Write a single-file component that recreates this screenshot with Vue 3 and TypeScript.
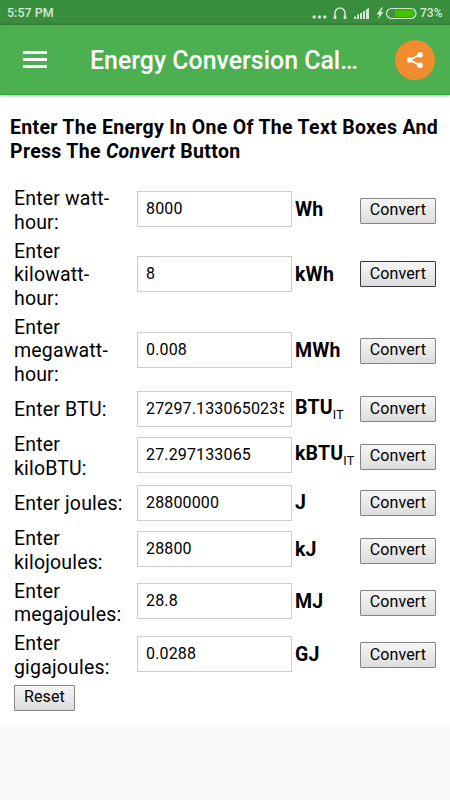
<script setup lang="ts">
import { ref } from 'vue'

interface EnergyUnit {
  lines: string[]
  unit: string
  sub?: string
  value: string
  joules: number
  size: string
  active?: boolean
}

const initial: EnergyUnit[] = [
  { lines: ['Enter watt-', 'hour:'], unit: 'Wh', value: '8000', joules: 3600, size: 'two' },
  { lines: ['Enter', 'kilowatt-', 'hour:'], unit: 'kWh', value: '8', joules: 3.6e6, size: 'three', active: true },
  { lines: ['Enter', 'megawatt-', 'hour:'], unit: 'MWh', value: '0.008', joules: 3.6e9, size: 'three' },
  { lines: ['Enter BTU:'], unit: 'BTU', sub: 'IT', value: '27297.1330650235', joules: 1055.05585262, size: 'one' },
  { lines: ['Enter', 'kiloBTU:'], unit: 'kBTU', sub: 'IT', value: '27.297133065', joules: 1055055.85262, size: 'two' },
  { lines: ['Enter joules:'], unit: 'J', value: '28800000', joules: 1, size: 'one' },
  { lines: ['Enter', 'kilojoules:'], unit: 'kJ', value: '28800', joules: 1e3, size: 'two' },
  { lines: ['Enter', 'megajoules:'], unit: 'MJ', value: '28.8', joules: 1e6, size: 'two' },
  { lines: ['Enter', 'gigajoules:'], unit: 'GJ', value: '0.0288', joules: 1e9, size: 'two' },
]

const rows = ref<EnergyUnit[]>(initial)

function convert(source: EnergyUnit): void {
  const energy = Number(source.value) * source.joules
  if (!Number.isFinite(energy)) return
  rows.value.forEach((row) => {
    row.active = row === source
    if (row !== source) row.value = String(Number((energy / row.joules).toPrecision(15)))
  })
}

function reset(): void {
  rows.value.forEach((row) => {
    row.value = ''
    row.active = false
  })
}
</script>

<template>
  <div class="screen">
    <div class="status">
      <span class="clock">5:57 PM</span>
      <svg class="status-icons" width="106" height="24" viewBox="0 0 106 24">
        <g fill="#d5e8d5">
          <circle cx="2.2" cy="16" r="1.7" />
          <circle cx="7.5" cy="16" r="1.7" />
          <circle cx="12.8" cy="16" r="1.7" />
          <path d="M42 18v-2l2-1v3zM45 18v-4l2-1v5zM48 18v-5.5l2-1V18zM51 18v-7.5l2-1V18zM54 18V8.500l3-1.500V18z" />
          <path d="M69.500 6.500L64.500 13.500h2.800L65.800 18.500l5.700-7.500h-2.800L71 6.500z" />
        </g>
        <path d="M23 17V12.500a5 5.500 0 0 1 10 0V17" fill="none" stroke="#d5e8d5" stroke-width="1.500" />
        <path d="M23 14.500V18M33 14.500V18" stroke="#d5e8d5" stroke-width="2.600" />
        <rect x="74.500" y="7.500" width="29.500" height="10" rx="5" fill="#3b913d" stroke="#d5e8d5" stroke-width="1.200" />
        <path d="M83 9h16a3.500 3.500 0 0 1 0 7H83z" fill="#43c000" />
      </svg>
      <span class="percent">73%</span>
    </div>
    <header class="toolbar">
      <button class="menu" aria-label="Menu"><i></i><i></i><i></i></button>
      <h1>Energy Conversion Cal…</h1>
      <button class="share" aria-label="Share">
        <svg width="18" height="18" viewBox="0 0 18 18">
          <path d="M14 3.500L4 9l10 5.500" fill="none" stroke="#fff" stroke-width="1.900" />
          <g fill="#fff">
            <circle cx="14" cy="3.800" r="2.800" />
            <circle cx="3.800" cy="9" r="2.800" />
            <circle cx="14" cy="14.200" r="2.800" />
          </g>
        </svg>
      </button>
    </header>
    <main>
      <h2>Enter The Energy In One Of The Text Boxes And<br />Press The <em>Convert</em> Button</h2>
      <form @submit.prevent>
        <div v-for="row in rows" :key="row.unit" class="row" :class="row.size">
          <label :for="row.unit"><span v-for="line in row.lines" :key="line">{{ line }}</span></label>
          <input :id="row.unit" v-model="row.value" type="text" />
          <div class="unit" :class="{ raised: row.sub }">{{ row.unit }}<sub v-if="row.sub">{{ row.sub }}</sub></div>
          <button type="button" class="push" :class="{ active: row.active }" @click="convert(row)">Convert</button>
        </div>
        <button type="button" class="push reset" @click="reset">Reset</button>
      </form>
    </main>
  </div>
</template>

<style>
body {
  background: #fafafa;
}
</style>

<style scoped>
.screen {
  width: 450px;
  height: 800px;
  overflow: hidden;
  background: #fafafa;
  color: #000;
  font-family: Roboto, sans-serif;
}
.status {
  display: flex;
  align-items: center;
  height: 25px;
  box-sizing: border-box;
  padding: 0 8px 0 7px;
  background: linear-gradient(#398e3d 22px, #34803a);
  color: #d5e8d5;
  font-size: 12.5px;
  font-weight: 500;
  line-height: 24px;
}
.status-icons {
  margin-left: auto;
}
.percent {
  width: 22px;
  margin-left: 2px;
  font-size: 12px;
}
.toolbar {
  position: relative;
  display: flex;
  align-items: center;
  height: 70px;
  box-sizing: border-box;
  padding: 0 15px 0 23px;
  background: #4caf50;
  border-bottom: 1px solid #2da637;
  box-shadow: 0 1px 3px rgba(0, 0, 0, 0.3);
}
button {
  margin: 0;
  padding: 0;
  border: 0;
  font-family: inherit;
}
.menu {
  display: grid;
  gap: 4px;
  width: 24px;
  background: none;
}
.menu i {
  height: 3px;
  background: #fff;
}
h1 {
  flex: 1;
  margin: 3px 0 0 43px;
  color: #fff;
  font-size: 24.9px;
  font-weight: 500;
  line-height: 32px;
  white-space: nowrap;
}
.share {
  display: grid;
  place-items: center;
  width: 40px;
  height: 40px;
  border-radius: 50%;
  background: #f08c2e;
}
main {
  height: 630px;
  box-sizing: border-box;
  padding: 21px 10px 0;
  background: #fff;
}
h2 {
  margin: 0 0 20.4px;
  font-size: 19.5px;
  font-weight: 700;
  line-height: 24px;
  letter-spacing: 0.31px;
  white-space: nowrap;
}
form {
  padding: 0 4px;
}
.row {
  display: grid;
  grid-template-columns: 123px 155px 68px 76px;
  align-items: center;
}
.one {
  height: 41.2px;
  margin-bottom: 0.4px;
}
.two {
  height: 52.4px;
}
.three {
  height: 76px;
}
label {
  padding-top: 1px;
  font-size: 19.5px;
  line-height: 23.7px;
  letter-spacing: 0.17px;
  white-space: nowrap;
}
label span {
  display: block;
}
input {
  width: 155px;
  height: 36px;
  box-sizing: border-box;
  padding: 0 7px 2px 8px;
  border: 1px solid #ccc;
  background: #fff;
  color: #000;
  font: 16px/32px Roboto, sans-serif;
  letter-spacing: 0.15px;
  outline: none;
}
.two input {
  margin-top: -3.2px;
  padding-bottom: 1px;
}
.three input {
  margin-top: -1.2px;
}
.unit {
  padding-left: 3px;
  font-size: 19.5px;
  font-weight: 700;
  line-height: 24px;
  letter-spacing: 0.2px;
  white-space: nowrap;
}
.two .unit {
  margin-top: -1px;
}
.three .unit {
  margin-top: 1px;
}
.one .raised {
  margin-top: -3px;
}
.two .raised {
  margin-top: -5px;
}
.unit sub {
  position: relative;
  top: 5px;
  font-size: 12.5px;
  font-weight: 400;
  line-height: 0;
  vertical-align: baseline;
}
.push {
  width: 76px;
  height: 26px;
  border: 1px solid #858585;
  border-radius: 1px;
  background: linear-gradient(#f6f6f6, #dcdcdc);
  color: #000;
  font-size: 16px;
  line-height: 22px;
  letter-spacing: 0.1px;
  padding-bottom: 1px;
}
.active {
  margin-top: -1.4px;
  border-color: #383838;
}
.reset {
  display: block;
  width: 61px;
  margin-top: 3px;
}
</style>
